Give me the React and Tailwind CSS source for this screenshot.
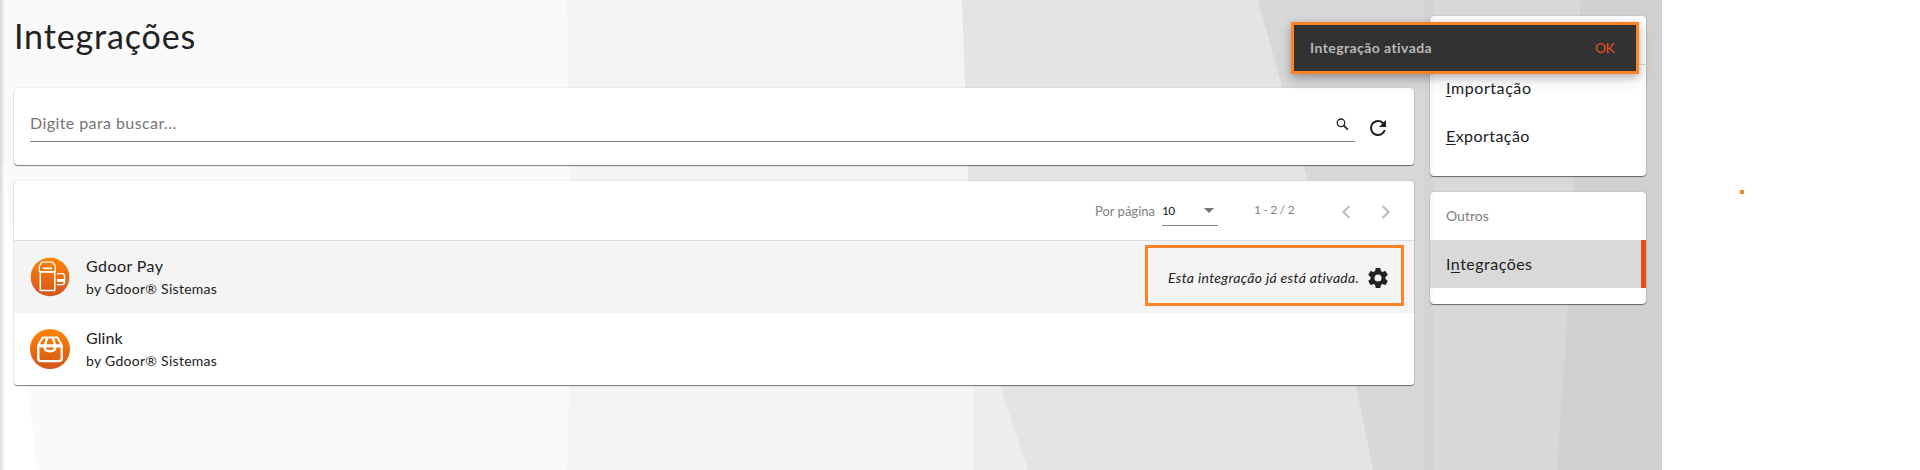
const card =
  "rounded-[4px] shadow-[0_1px_1px_rgba(0,0,0,0.5),0_0_2px_rgba(0,0,0,0.16)]";

function Backdrop() {
  return (
    <svg className="absolute inset-0 h-[470px] w-[1662px]" viewBox="0 0 1662 470" aria-hidden="true">
      <rect width="1662" height="470" fill="#fafafa" />
      <polygon points="0,165 5,165 28,387 36.5,470 0,470" fill="#ffffff" />
      <polygon points="567,0 571,210 569.5,386 567,470 1662,470 1662,0" fill="#f4f4f4" />
      <polygon points="962,0 973,230 973,470 1662,470 1662,0" fill="#eeeeee" />
      <polygon points="962,0 972.5,302 1000,386 1028,470 1662,470 1662,0" fill="#e4e4e4" />
      <polygon points="1258,0 1308,181 1356,386 1373,470 1662,470 1662,0" fill="#d8d8d8" />
      <polygon points="1580.5,0 1574.5,175 1568,305 1557,470 1662,470 1662,0" fill="#d0d0d0" />
      <rect x="1424" width="10" height="470" fill="#d4d4d4" />
    </svg>
  );
}

function PayLogo() {
  return (
    <svg className="size-10 shrink-0" viewBox="0 0 40 40" fill="none" stroke="#fff">
      <defs>
        <linearGradient id="pay" x1="0" y1="0" x2="0" y2="1">
          <stop offset="0" stopColor="#ff8400" />
          <stop offset="1" stopColor="#d2551e" />
        </linearGradient>
      </defs>
      <circle cx="20" cy="20" r="19.3" fill="url(#pay)" stroke="none" />
      <path d="M10.3 33.4V14.9h14.5v18.5z" strokeWidth="1.5" />
      <path d="M9.3 14.6V9.2l2.6-4h10.8l2.6 4v5.4z" strokeWidth="1.3" strokeLinejoin="round" />
      <path d="M13 11.4h9" strokeWidth="1.6" />
      <path d="M27 16.6h5.8l1.7 1.5v8l-1.7 1.5H27" strokeWidth="1.4" />
      <path d="M27 23.6h7.6" strokeWidth="3" />
    </svg>
  );
}

function GlinkLogo() {
  return (
    <svg className="size-10 shrink-0" viewBox="0 0 40 40" fill="none" stroke="#fff">
      <defs>
        <linearGradient id="glink" x1="0" y1="0" x2="0" y2="1">
          <stop offset="0" stopColor="#ff8400" />
          <stop offset="1" stopColor="#d2551e" />
        </linearGradient>
      </defs>
      <circle cx="20" cy="20" r="20" fill="url(#glink)" stroke="none" />
      <path d="M8.3 16.5v13a2.6 2.6 0 0 0 2.6 2.6h18.2a2.6 2.6 0 0 0 2.6-2.6v-13" strokeWidth="2.3" />
      <path d="M12.6 8.6h14.8l4.4 7.6H8.2z" strokeWidth="2" strokeLinejoin="round" />
      <path d="M8 17.2h24" strokeWidth="2.6" />
      <path d="M17 9l-2.2 8v1.8c0 2.2 2 3.4 5.2 3.4s5.2-1.2 5.2-3.4V17L23 9" strokeWidth="2.4" />
    </svg>
  );
}

function Row({ logo, name, tracking, className, children }) {
  return (
    <div className={"flex h-[72px] items-center pl-4 pr-6 " + className}>
      {logo}
      <div className="ml-4 flex-1">
        <div className={"text-[16px] leading-[24px] " + tracking}>{name}</div>
        <div className="text-[14px] leading-[22px] tracking-[0.28px]">by Gdoor® Sistemas</div>
      </div>
      {children}
    </div>
  );
}

export default function App() {
  return (
    <div className="relative flex h-[470px] w-[1920px] overflow-hidden bg-white font-['Lato','Liberation_Sans',sans-serif] text-[#212121]">
      <Backdrop />
      <div className="absolute left-0 top-0 h-full w-[5px] bg-linear-to-r from-black/15 to-transparent" />

      <main className="relative ml-[14px] w-[1400px]">
        <h1 className="h-[88px] pt-[14px] text-[34px] leading-[44px] tracking-[0.86px]">Integrações</h1>

        <section className={"flex h-[77px] items-start bg-white pl-4 " + card}>
          <div className="flex h-[54px] w-[1325px] items-center justify-between border-b border-[#858585] pr-1.5 pt-4">
            <span className="text-[16px] leading-5 tracking-[0.42px] text-[#757575]">Digite para buscar...</span>
            <svg className="mt-1 size-[13px]" viewBox="0 0 13 13" fill="none" stroke="#212121">
              <circle cx="5" cy="4.8" r="3.8" strokeWidth="1.3" />
              <path d="M7.8 7.6l4 4" strokeWidth="1.7" />
            </svg>
          </div>
          <svg className="ml-[11px] mt-[28px] size-6" viewBox="0 0 24 24" fill="#212121">
            <path d="M17.65 6.35A7.96 7.96 0 0 0 12 4a8 8 0 1 0 7.73 10h-2.08A6 6 0 1 1 12 6c1.66 0 3.14.69 4.22 1.78L13 11h7V4z" />
          </svg>
        </section>

        <section className={"mt-4 overflow-hidden bg-white " + card}>
          <div className="flex h-[60px] items-center border-b border-[#dedede] pl-[1081px] text-[13px] text-[#808080]">
            <span className="w-[67px] leading-[18px]">Por página</span>
            <div className="mt-0.5 flex h-7 w-14 items-center justify-between border-b border-[#858585] pr-1 text-[#212121]">
              <span className="text-[12px] tracking-[-0.8px]">10</span>
              <svg className="mb-[2px] h-[5px] w-[10px]" viewBox="0 0 10 5" fill="#757575">
                <path d="M0 0h10L5 5z" />
              </svg>
            </div>
            <span className="ml-9 w-[87px] pb-0.5 text-[12px] tracking-[-0.3px]">1 - 2 / 2</span>
            <svg className="mt-0.5 h-[14px] w-[10px]" viewBox="0 0 10 14" fill="none" stroke="#bdbdbd" strokeWidth="2.2">
              <path d="M8.5 1L2.4 7l6.1 6" />
            </svg>
            <svg className="ml-[30px] mt-0.5 h-[14px] w-[10px]" viewBox="0 0 10 14" fill="none" stroke="#bdbdbd" strokeWidth="2.2">
              <path d="M1.5 1l6.1 6-6.1 6" />
            </svg>
          </div>
          <Row logo={<PayLogo />} name="Gdoor Pay" tracking="tracking-[0.42px]" className="bg-[#f4f4f4]">
            <div className="-mr-3.5 mb-[3px] flex h-[61px] w-[259px] items-center border-[3px] border-[#ff8228] pl-5 pt-[3px]">
              <span className="whitespace-nowrap text-[14px] italic tracking-[0.33px]">Esta integração já está ativada.</span>
              <svg className="ml-[7px] mt-px size-6" viewBox="0 0 24 24" fill="#212121">
                <path d="M19.43 12.98c.04-.32.07-.64.07-.98s-.03-.66-.07-.98l2.11-1.65a.5.5 0 0 0 .12-.64l-2-3.46a.5.5 0 0 0-.61-.22l-2.49 1a7.3 7.3 0 0 0-1.69-.98l-.38-2.65A.49.49 0 0 0 14 2h-4a.49.49 0 0 0-.49.42l-.38 2.65c-.61.25-1.17.59-1.69.98l-2.49-1a.49.49 0 0 0-.61.22l-2 3.46a.49.49 0 0 0 .12.64l2.11 1.65c-.04.32-.07.65-.07.98s.03.66.07.98l-2.11 1.65a.5.5 0 0 0-.12.64l2 3.46c.12.22.39.3.61.22l2.49-1c.52.4 1.08.73 1.69.98l.38 2.65c.03.24.24.42.49.42h4c.25 0 .46-.18.49-.42l.38-2.65c.61-.25 1.17-.59 1.69-.98l2.49 1c.23.09.49 0 .61-.22l2-3.46a.5.5 0 0 0-.12-.64zM12 15.5a3.5 3.5 0 1 1 0-7 3.5 3.5 0 0 1 0 7z" />
              </svg>
            </div>
          </Row>
          <Row logo={<GlinkLogo />} name="Glink" tracking="tracking-[0.1px]" className="bg-white" />
        </section>
      </main>

      <aside className="relative ml-4 w-[216px] pt-4">
        <nav className={"h-40 bg-white bg-linear-to-r from-[#fafafa] from-[4px] to-white to-[4px] text-[16px] " + card}>
          <div className="h-[49px] border-b border-[#dedede]" />
          <div className="flex h-12 items-center pb-0.5 pl-4 tracking-[0.58px]">
            <span><u className="underline-offset-2">I</u>mportação</span>
          </div>
          <div className="flex h-12 items-center pb-0.5 pl-4 tracking-[0.44px]">
            <span><u className="underline-offset-2">E</u>xportação</span>
          </div>
        </nav>
        <nav className={"mt-4 h-28 bg-white bg-linear-to-r from-[#fafafa] from-[4px] to-white to-[4px] " + card}>
          <div className="flex h-12 items-center pb-0.5 pl-4 text-[14px] text-[#808080]">Outros</div>
          <div className="flex h-12 items-center border-r-[5px] border-[#e84e1b] bg-[#d9d9d9] pl-4 text-[16px] tracking-[0.48px]">
            <span>I<u className="underline-offset-2">n</u>tegrações</span>
          </div>
        </nav>
      </aside>

      <div className="absolute left-[1291px] top-[22px] flex h-[52px] w-[348px] items-center justify-between border-[3px] border-[#ff8228] bg-[#323232] pb-0.5 pl-4 pr-[22px] text-[14px] shadow-[0_3px_8px_rgba(0,0,0,0.25),0_6px_16px_rgba(0,0,0,0.1)]">
        <span className="font-bold tracking-[0.42px] text-[#b8b8b8]">Integração ativada</span>
        <span className="tracking-[-0.7px] text-[#e84e1b]">OK</span>
      </div>

      <div className="absolute left-[1740px] top-[190px] size-1 bg-[#ff8228]" />
    </div>
  );
}
